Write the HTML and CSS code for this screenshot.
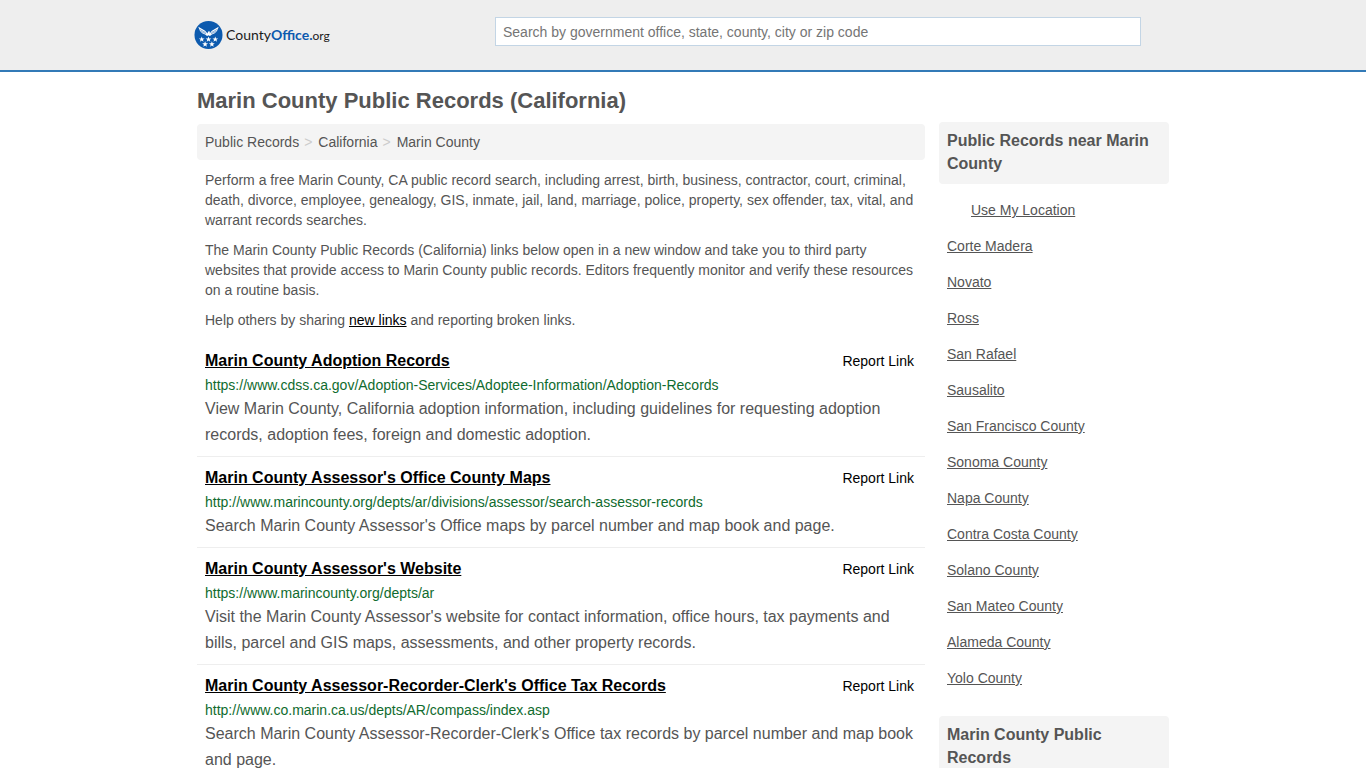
FILE: index.html
```html
<!DOCTYPE html>
<html lang="en">
<head>
<meta charset="utf-8">
<meta name="viewport" content="width=device-width, initial-scale=1">
<title>Marin County Public Records (California)</title>
<link rel="stylesheet" href="styles.css">
</head>
<body>
<header class="site-header">
  <div class="header-inner">
    <a class="logo" href="#">
      <svg class="logo-mark" viewBox="0 0 30 30" aria-hidden="true">
        <defs>
          <path id="star" d="M0-3 .8-.9 3-.9 1.200.500 1.900 2.600 0 1.300-1.900 2.600-1.200.5-3-.9-.8-.9Z"/>
        </defs>
        <circle cx="15" cy="15" r="14.500" fill="#0c5aae"/>
        <g fill="#fff">
          <path d="M4.500 6.500 11.500 10.500 14 13.500 14.500 11.300 16.500 11.500 16.200 13.500 18.500 10.500 25.500 6.500 24.500 9.500 23.300 11.500 21.500 13.300 18.500 14.500 16.500 16 15 15.300 13.500 16 11.500 14.500 8.500 13.300 6.700 11.500 5.500 9.500Z"/>
          <use href="#star" x="8" y="19.500"/>
          <use href="#star" x="15" y="19.500"/>
          <use href="#star" x="22" y="19.500"/>
          <use href="#star" x="11.500" y="24.500"/>
          <use href="#star" x="18.500" y="24.500"/>
        </g>
        <path d="M5.500 9 12 12.500M7 11.300 12.500 13.800M24.500 9 18 12.500M23 11.300 17.500 13.800" stroke="#0c5aae" stroke-width=".5"/>
      </svg>
      <span class="logo-text">County<b>Office.</b><span class="logo-tld">org</span></span>
    </a>
    <form class="search">
      <input class="search-input" type="search" aria-label="Search" placeholder="Search by government office, state, county, city or zip code">
    </form>
  </div>
</header>
<div class="page">
  <main class="main">
    <h1 class="title">Marin County Public Records (California)</h1>
    <nav class="breadcrumb" aria-label="Breadcrumb">
      <a href="#">Public Records</a><span class="sep">&gt;</span><a href="#">California</a><span class="sep">&gt;</span><a href="#">Marin County</a>
    </nav>
    <div class="intro">
      <p>Perform a free Marin County, CA public record search, including arrest, birth, business, contractor, court, criminal, death, divorce, employee, genealogy, GIS, inmate, jail, land, marriage, police, property, sex offender, tax, vital, and warrant records searches.</p>
      <p>The Marin County Public Records (California) links below open in a new window and take you to third party websites that provide access to Marin County public records. Editors frequently monitor and verify these resources on a routine basis.</p>
      <p>Help others by sharing <a class="new-links" href="#">new links</a> and reporting broken links.</p>
    </div>
    <ul class="records">
      <li class="record">
        <div class="record-head"><a class="record-title" href="#">Marin County Adoption Records</a><a class="report" href="#">Report Link</a></div>
        <div class="record-url">https://www.cdss.ca.gov/Adoption-Services/Adoptee-Information/Adoption-Records</div>
        <p class="record-text">View Marin County, California adoption information, including guidelines for requesting adoption records, adoption fees, foreign and domestic adoption.</p>
      </li>
      <li class="record">
        <div class="record-head"><a class="record-title" href="#">Marin County Assessor's Office County Maps</a><a class="report" href="#">Report Link</a></div>
        <div class="record-url">http://www.marincounty.org/depts/ar/divisions/assessor/search-assessor-records</div>
        <p class="record-text">Search Marin County Assessor's Office maps by parcel number and map book and page.</p>
      </li>
      <li class="record">
        <div class="record-head"><a class="record-title" href="#">Marin County Assessor's Website</a><a class="report" href="#">Report Link</a></div>
        <div class="record-url">https://www.marincounty.org/depts/ar</div>
        <p class="record-text">Visit the Marin County Assessor's website for contact information, office hours, tax payments and bills, parcel and GIS maps, assessments, and other property records.</p>
      </li>
      <li class="record">
        <div class="record-head"><a class="record-title" href="#">Marin County Assessor-Recorder-Clerk's Office Tax Records</a><a class="report" href="#">Report Link</a></div>
        <div class="record-url">http://www.co.marin.ca.us/depts/AR/compass/index.asp</div>
        <p class="record-text">Search Marin County Assessor-Recorder-Clerk's Office tax records by parcel number and map book and page.</p>
      </li>
    </ul>
  </main>
  <aside class="side">
    <h2 class="side-title">Public Records near Marin County</h2>
    <ul class="places">
      <li class="locate"><a href="#">Use My Location</a></li>
      <li><a href="#">Corte Madera</a></li>
      <li><a href="#">Novato</a></li>
      <li><a href="#">Ross</a></li>
      <li><a href="#">San Rafael</a></li>
      <li><a href="#">Sausalito</a></li>
      <li><a href="#">San Francisco County</a></li>
      <li><a href="#">Sonoma County</a></li>
      <li><a href="#">Napa County</a></li>
      <li><a href="#">Contra Costa County</a></li>
      <li><a href="#">Solano County</a></li>
      <li><a href="#">San Mateo County</a></li>
      <li><a href="#">Alameda County</a></li>
      <li><a href="#">Yolo County</a></li>
    </ul>
    <h2 class="side-title">Marin County Public Records</h2>
  </aside>
</div>
</body>
</html>
```
FILE: styles.css
```css
* { box-sizing: border-box; }
html { overflow-x: hidden; scrollbar-width: none; }
body {
  margin: 0;
  background: #fff;
  color: #555;
  font: 14px/20px "Liberation Sans", Arial, sans-serif;
}
ul { margin: 0; padding: 0; list-style: none; }
a { color: inherit; }

.site-header { background: #eee; border-bottom: 2px solid #337ab7; }
.header-inner {
  display: flex;
  justify-content: space-between;
  align-items: flex-start;
  gap: 24px;
  max-width: 978px;
  min-height: 70px;
  margin: 0 auto;
  padding: 17px 31px 0 0;
}
.logo {
  display: flex;
  align-items: center;
  gap: 3px;
  margin-top: 3px;
  text-decoration: none;
}
.logo-mark { width: 29px; height: 30px; }
.logo-text { color: #1b1b1b; font: 14px/20px Lato, sans-serif; }
.logo-text b { color: #0c5aae; font-weight: 700; }
.logo-tld { font-size: 12px; }
.search { flex: 0 1 646px; }
.search-input {
  display: block;
  width: 100%;
  height: 29px;
  margin: 0;
  padding: 0 7px;
  border: 1px solid #c3d5e5;
  border-radius: 0;
  background: #fff;
  font: inherit;
  appearance: none;
}
.search-input::placeholder { color: #757575; }

.page {
  display: grid;
  grid-template-columns: minmax(0, 1fr) 230px;
  gap: 14px;
  max-width: 972px;
  margin: 0 auto;
}
.title { margin: 0; padding: 17px 0 11px; font-size: 22px; line-height: 24px; }
.breadcrumb {
  padding: 8px;
  border-radius: 4px;
  background: #f4f4f4;
}
.breadcrumb a { text-decoration: none; }
.sep { padding: 0 6px 0 5px; color: #ccc; }
.intro { padding: 0 8px; }
.intro p { margin: 10px 0; }
.new-links { color: #000; }

.record { padding: 8px; border-bottom: 1px solid #eee; }
.record-head {
  display: flex;
  justify-content: space-between;
  padding-right: 3px;
  line-height: 26px;
  color: #000;
}
.record-title { font-size: 16px; font-weight: 700; }
.report { text-decoration: none; }
.record-url { line-height: 22px; color: #0f6b2e; }
.record-text { margin: 0; font-size: 16px; line-height: 26px; }

.side { padding-top: 50px; }
.side-title {
  margin: 0;
  padding: 7px 8px 9px;
  border-radius: 4px;
  background: #f4f4f4;
  font-size: 16px;
  line-height: 23px;
}
.places { padding: 8px 8px 20px; }
.places li { padding: 8px 0; }
.places .locate { padding-left: 24px; }
```
